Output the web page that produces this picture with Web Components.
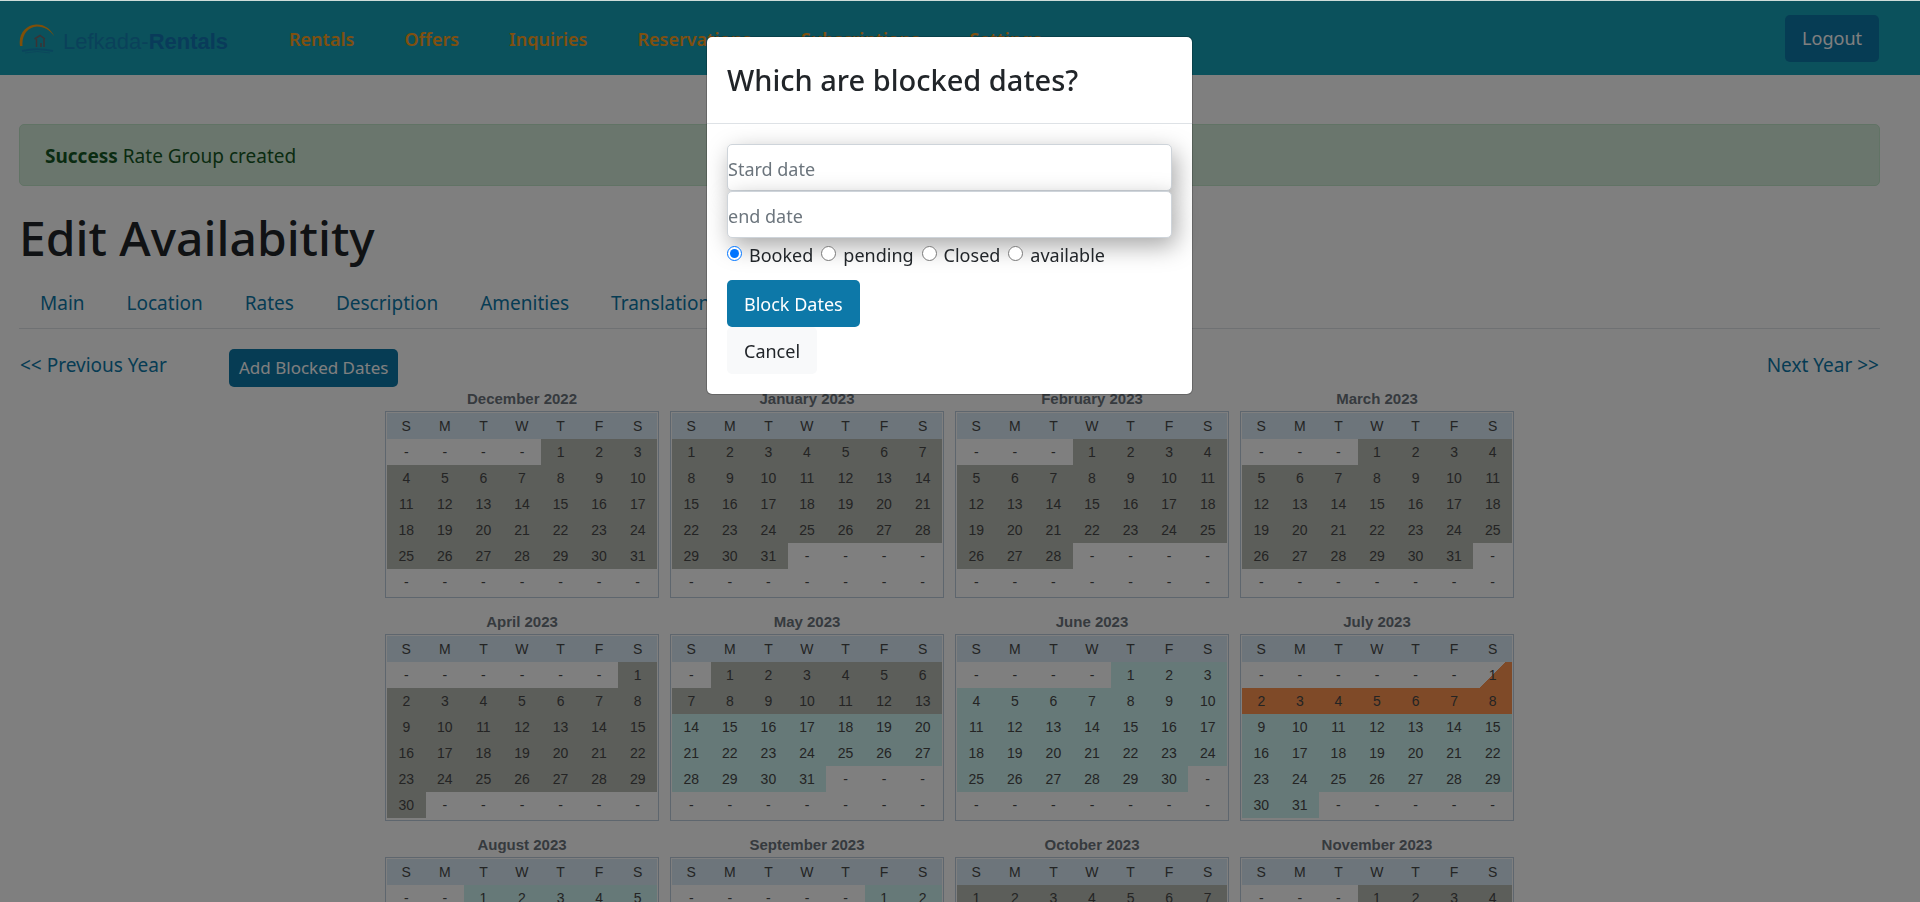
<!DOCTYPE html>
<html lang="en">
<head>
  <meta charset="utf-8">
  <meta name="viewport" content="width=device-width, initial-scale=1">
  <title>Edit Availability</title>
  <style>
    body {
      margin: 0;
      height: 100vh;
      overflow: hidden;
      background: #fff;
      color: #212529;
      font: 18px/30px "Noto Sans", "Open Sans", sans-serif;
      --scrollbar: 21px;
      --primary: #0d78a8;
    }
  </style>
</head>
<body>
  <rental-page>
    <site-nav slot="nav">
      <nav-item href="#rentals">Rentals</nav-item>
      <nav-item href="#offers">Offers</nav-item>
      <nav-item href="#inquiries">Inquiries</nav-item>
      <nav-item href="#reservations">Reservations</nav-item>
      <nav-item href="#subscriptions">Subscriptions</nav-item>
      <nav-item href="#settings">Settings</nav-item>
      <app-button slot="end" variant="primary">Logout</app-button>
    </site-nav>
    <flash-alert><b slot="status">Success</b> Rate Group created</flash-alert>
    <page-title>Edit Availabitity</page-title>
    <tab-list>
      <tab-item href="#main">Main</tab-item>
      <tab-item href="#location">Location</tab-item>
      <tab-item href="#rates">Rates</tab-item>
      <tab-item href="#description">Description</tab-item>
      <tab-item href="#amenities">Amenities</tab-item>
      <tab-item href="#translations">Translations</tab-item>
    </tab-list>
    <year-bar>
      <text-link slot="prev" href="#2022">&lt;&lt; Previous Year</text-link>
      <app-button variant="primary" size="small">Add Blocked Dates</app-button>
      <text-link slot="next" href="#2024">Next Year &gt;&gt;</text-link>
    </year-bar>
    <year-calendar start="2022-12" months="12"></year-calendar>
    <modal-dialog slot="modal">
      <span slot="title">Which are blocked dates?</span>
      <block-form></block-form>
    </modal-dialog>
  </rental-page>

  <script>
    function register(name, clz) {
      !customElements.get(name) && customElements.define(name, clz);
    }

    class Component extends HTMLElement {
      constructor() {
        super();
        this.attachShadow({ mode: "open" });
      }
      attr(name, fallback = "") {
        return this.getAttribute(name) || fallback;
      }
      connectedCallback() {
        this.shadowRoot.innerHTML = `
          <style>*, ::before { box-sizing: border-box; } ${this.constructor.styles}</style>
          ${this.render()}
        `;
      }
      render() {
        return "<slot></slot>";
      }
    }
    Component.styles = "";

    class RentalPage extends Component {
      render() {
        return `
          <slot name="nav"></slot>
          <main><slot></slot></main>
          <slot name="modal"></slot>
        `;
      }
    }
    RentalPage.styles = `
      :host { display: block; border-top: 1px solid #cfdcd9; }
      main { padding: 49px calc(19px + var(--scrollbar)) 0 19px; }
    `;

    class SiteNav extends Component {
      render() {
        return `
          <a class="brand" href="#home">
            <svg width="40" height="34" viewBox="0 0 40 34" aria-hidden="true">
              <path d="M1 25C-1 13 7 4 17 3.500C25 3 32 8 35.500 15.500C31 9 25 5.500 18 5.500C9 5.800 2.500 14 3.500 25Z" fill="#ff9f10"/>
              <path d="M15.500 18L21 14.500L26 18M17.500 18V26M25 18V26M22 22V26" fill="none" stroke="#75666a" stroke-width="1.500"/>
              <path d="M3 30Q18 26.500 34 30" fill="none" stroke="#1682b8" stroke-width="2" opacity=".7"/>
              <path d="M6 32Q18 29 31 32" fill="none" stroke="#1682b8" opacity=".6"/>
            </svg>
            <span>Lefkada-<b>Rentals</b></span>
          </a>
          <nav><slot></slot></nav>
          <slot name="end"></slot>
        `;
      }
    }
    SiteNav.styles = `
      :host {
        display: flex;
        align-items: center;
        height: 74px;
        padding: 0 calc(20px + var(--scrollbar)) 0 19px;
        background: #17a2b8;
      }
      .brand {
        display: flex;
        align-items: center;
        gap: 4px;
        width: 245px;
        color: #1583b4;
        font: 22px/30px "Liberation Sans", Arial, sans-serif;
        text-decoration: none;
      }
      .brand b { color: #1276b4; }
      .brand span { padding-top: 8px; }
      nav { display: flex; flex: 1; }
    `;

    class NavItem extends Component {
      render() {
        return `<a href="${this.attr("href", "#")}"><slot></slot></a>`;
      }
    }
    NavItem.styles = `
      :host { display: block; }
      a {
        display: block;
        padding: 12px 25px 10px;
        color: #ffa01e;
        font-weight: 600;
        text-decoration: none;
      }
    `;

    class AppButton extends Component {
      render() {
        return `<button type="button"><slot></slot></button>`;
      }
    }
    AppButton.styles = `
      :host { display: block; }
      button {
        display: block;
        height: 47px;
        padding: 0 17px;
        border: 0;
        border-radius: 5px;
        background: #f8f9fa;
        color: #212529;
        font: inherit;
        cursor: pointer;
      }
      :host([variant="primary"]) button { background: var(--primary); color: #fff; }
      :host([size="small"]) button { height: 38px; padding: 0 10px; font-size: 17px; }
    `;

    class FlashAlert extends Component {
      render() {
        return `<div role="alert"><slot name="status"></slot><slot></slot></div>`;
      }
    }
    FlashAlert.styles = `
      :host { display: block; margin-bottom: 20px; }
      div {
        padding: 16px 25px 14px;
        border: 1px solid #c3e6cb;
        border-radius: 5px;
        background: #d4edda;
        color: #155724;
        font-size: 19px;
      }
    `;

    class PageTitle extends Component {
      render() {
        return "<h1><slot></slot></h1>";
      }
    }
    PageTitle.styles = `
      :host { display: block; }
      h1 { margin: 0 0 8px; font-size: 48px; font-weight: 500; line-height: 64px; }
    `;

    class TabList extends Component {
      render() {
        return "<nav><slot></slot></nav>";
      }
    }
    TabList.styles = `
      :host { display: block; margin-bottom: 20px; border-bottom: 1px solid #dee2e6; }
      nav { display: flex; }
    `;

    class TabItem extends Component {
      render() {
        return `<a href="${this.attr("href", "#")}"><slot></slot></a>`;
      }
    }
    TabItem.styles = `
      :host { display: block; }
      a {
        display: block;
        padding: 10px 21px;
        color: var(--primary);
        font-size: 19px;
        text-decoration: none;
      }
    `;

    class TextLink extends Component {
      render() {
        return `<a href="${this.attr("href", "#")}"><slot></slot></a>`;
      }
    }
    TextLink.styles = `
      :host { display: block; line-height: 32px; }
      a { color: var(--primary); font-size: 19px; text-decoration: none; }
    `;

    class YearBar extends Component {
      render() {
        return `
          <slot name="prev"></slot>
          <slot></slot>
          <slot name="next"></slot>
        `;
      }
    }
    YearBar.styles = `
      :host {
        display: grid;
        grid-template-columns: 209px auto 1fr;
        align-items: start;
        padding: 0 1px;
      }
      slot[name="next"] { display: block; justify-self: end; }
    `;

    const MONTHS = ["January", "February", "March", "April", "May", "June", "July",
      "August", "September", "October", "November", "December"];

    // Status runs, from each date on until the next one
    const PERIODS = [
      ["2022-12-01", "closed"],
      ["2023-05-14", "available"],
      ["2023-07-01", "arrival"],
      ["2023-07-02", "booked"],
      ["2023-07-09", "available"],
      ["2023-10-01", "closed"]
    ];

    function statusOf(date) {
      let status = "";
      for (const [from, name] of PERIODS) {
        if (date >= from) status = name;
      }
      return status;
    }

    class YearCalendar extends Component {
      render() {
        const [year, month] = this.attr("start").split("-").map(Number);
        let view = "";
        for (let i = 0; i < Number(this.attr("months", "12")); i++) {
          const index = month - 1 + i;
          view += `<month-calendar year="${year + Math.floor(index / 12)}" month="${index % 12 + 1}"></month-calendar>`;
        }
        return view;
      }
    }
    YearCalendar.styles = `
      :host {
        display: grid;
        grid-template-columns: repeat(auto-fit, 274px);
        gap: 12px 11px;
        max-width: 1129px;
        margin: 0 auto;
      }
    `;

    class MonthCalendar extends Component {
      render() {
        const year = Number(this.attr("year"));
        const month = Number(this.attr("month"));
        const first = new Date(year, month - 1, 1).getDay();
        const days = new Date(year, month, 0).getDate();
        let rows = "";
        for (let week = 0; week < 6; week++) {
          rows += "<tr>";
          for (let d = 0; d < 7; d++) {
            const day = week * 7 + d - first + 1;
            if (day < 1 || day > days) {
              rows += "<td>-</td>";
              continue;
            }
            const date = `${year}-${String(month).padStart(2, "0")}-${String(day).padStart(2, "0")}`;
            rows += `<td class="${statusOf(date)}">${day}</td>`;
          }
          rows += "</tr>";
        }
        return `
          <table>
            <caption>${MONTHS[month - 1]} ${year}</caption>
            <thead><tr>${[..."SMTWTFS"].map((d) => `<th>${d}</th>`).join("")}</tr></thead>
            <tbody>${rows}</tbody>
          </table>
        `;
      }
    }
    MonthCalendar.styles = `
      :host { display: block; }
      table {
        width: 100%;
        padding: 1px 1px 2px;
        border: 1px solid #bccddc;
        border-spacing: 0;
        table-layout: fixed;
        color: #484848;
        font: 14px/20px "Liberation Sans", Arial, sans-serif;
        text-align: center;
      }
      caption { color: #6c757d; font-size: 15px; font-weight: bold; line-height: 24px; }
      th, td { height: 26px; padding: 0; font-weight: normal; }
      th { background: #daebf6; }
      .closed { background: #b8bcb4; }
      .available { background: #ccf2f0; }
      .booked { background: #ff9450; }
      .arrival { background: linear-gradient(135deg, transparent 50%, #ff9450 50%); }
    `;

    class ModalDialog extends Component {
      render() {
        return `
          <section role="dialog" aria-modal="true" aria-labelledby="title">
            <header><h4 id="title"><slot name="title"></slot></h4></header>
            <div><slot></slot></div>
          </section>
        `;
      }
    }
    ModalDialog.styles = `
      :host {
        position: fixed;
        inset: 1px 0 0;
        display: flex;
        align-items: flex-start;
        justify-content: center;
        padding: 35px var(--scrollbar) 0 0;
        background: rgba(0, 0, 0, .5);
      }
      section {
        width: 100%;
        max-width: 487px;
        border: 1px solid rgba(0, 0, 0, .2);
        border-radius: 6px;
        background: #fff;
        background-clip: padding-box;
      }
      header { padding: 19px 20px 20px; border-bottom: 1px solid #dee2e6; }
      h4 { margin: 0; font-size: 29px; font-weight: 500; line-height: 47px; }
      div { padding: 20px; }
    `;

    class BlockForm extends Component {
      render() {
        const states = ["Booked", "pending", "Closed", "available"];
        return `
          <form>
            <input type="text" placeholder="Stard date" aria-label="Start date">
            <input type="text" placeholder="end date" aria-label="End date">
            <fieldset>
              ${states.map((s, i) => `<label><input type="radio" name="status" value="${s}" ${i ? "" : "checked"}>${s}</label>`).join("")}
            </fieldset>
            <app-button variant="primary">Block Dates</app-button>
            <app-button>Cancel</app-button>
          </form>
        `;
      }
    }
    BlockForm.styles = `
      :host { display: block; }
      form { display: flex; flex-direction: column; align-items: flex-start; }
      input[type="text"] {
        width: 100%;
        height: 47px;
        padding: 3px 0 0;
        border: 1px solid #ced4da;
        border-radius: 5px;
        background: #fff;
        box-shadow: 4px 8px 24px rgba(0, 0, 0, .35);
        font: inherit;
      }
      input::placeholder { color: #6c757d; opacity: 1; }
      fieldset {
        display: flex;
        gap: 8px;
        margin: 0 0 8px;
        padding: 0;
        border: 0;
        line-height: 34px;
      }
      label { display: flex; align-items: center; gap: 7px; }
      input[type="radio"] { width: 15px; height: 15px; margin: 0 0 4px; accent-color: #0075ff; }
    `;

    register("rental-page", RentalPage);
    register("site-nav", SiteNav);
    register("nav-item", NavItem);
    register("app-button", AppButton);
    register("flash-alert", FlashAlert);
    register("page-title", PageTitle);
    register("tab-list", TabList);
    register("tab-item", TabItem);
    register("text-link", TextLink);
    register("year-bar", YearBar);
    register("month-calendar", MonthCalendar);
    register("year-calendar", YearCalendar);
    register("modal-dialog", ModalDialog);
    register("block-form", BlockForm);
  </script>
</body>
</html>
